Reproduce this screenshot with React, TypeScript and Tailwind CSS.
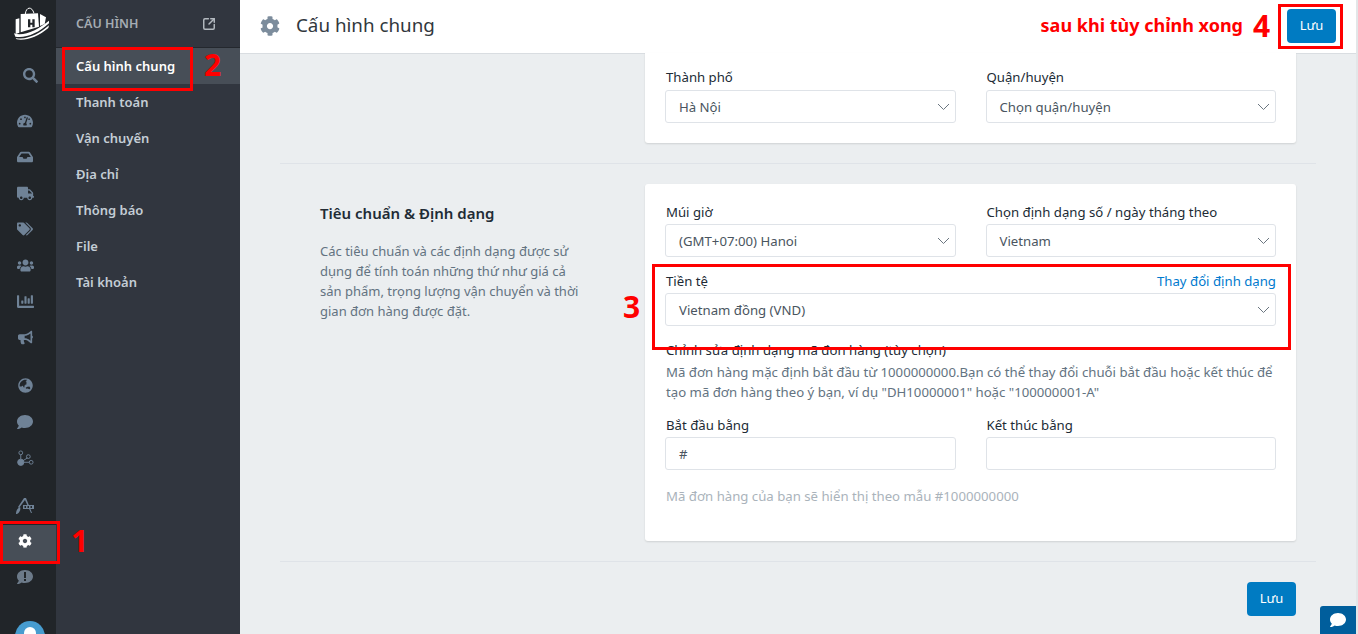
import { SquareArrowOutUpRight } from 'lucide-react';
import {
  FaBullhorn,
  FaChartBar,
  FaCog,
  FaComment,
  FaGlobeAsia,
  FaInbox,
  FaSearch,
  FaTachometerAlt,
  FaTags,
  FaTruck,
  FaUsers,
} from 'react-icons/fa';

const menu = ['Cấu hình chung', 'Thanh toán', 'Vận chuyển', 'Địa chỉ', 'Thông báo', 'File', 'Tài khoản'];

function Logo() {
  return (
    <svg viewBox="0 0 168 144" className="w-14 h-12 text-white" fill="currentColor">
      <path d="M76 42 C78 20 96 18 102 40" fill="none" stroke="currentColor" strokeWidth="3" />
      <path d="M47 58 L58 55 L58 98 L47 102 Z" />
      <path d="M62 42 L114 40 L117 80 L62 97 Z" />
      <path d="M120 42 L138 52 L134 72 L120 78 Z" />
      <path d="M84 58 h7 v10 h6 v-10 h7 v24 h-7 v-8 h-6 v8 h-7 z" fill="#212529" />
      <path d="M42 100 C72 110 112 90 147 62 L147 70 C115 100 75 116 46 110 Z" />
      <path d="M47 114 C80 122 120 100 147 76 L145 84 C115 110 75 124 50 118 Z" />
    </svg>
  );
}

function NodesIcon() {
  return (
    <svg viewBox="0 0 18 18" className="w-[17px] h-[17px] text-[#6f8296]" fill="none" stroke="currentColor" strokeWidth="1">
      <circle cx="4" cy="13" r="3.3" fill="currentColor" />
      <circle cx="4" cy="3" r="2" />
      <circle cx="12" cy="7" r="2" />
      <circle cx="15" cy="13" r="2" />
      <path d="M4 5 V10 M6 11.5 L11 8.5 M7 13 H13" />
    </svg>
  );
}

function DesignIcon() {
  return (
    <svg viewBox="0 0 18 16" className="w-[18px] h-4 text-[#6f8296]" fill="currentColor">
      <path d="M8 0 h2 L16 15 h-1 L9 2 L3 10 L2 9 Z" />
      <path d="M0 16 C0 12 2 10 4 9 C5 11 4 14 1 16 Z" />
      <rect x="7" y="7" width="11" height="4" />
      <path d="M8.500 8 h1.500 v2 h-1.500 z M11.500 8 h1.500 v2 h-1.500 z M14.500 8 h1.500 v2 h-1.500 z" fill="#212529" />
    </svg>
  );
}

function FeedbackIcon() {
  return (
    <div className="relative flex">
      <FaComment className="text-[16px] text-[#6c7a89]" />
      <span className="absolute left-[7px] top-[3px] w-[2px] h-[6px] bg-[#212529]" />
      <span className="absolute left-[7px] top-[10px] w-[2px] h-[2px] bg-[#212529]" />
    </div>
  );
}

function RailIcon({ children, className }: { children: React.ReactNode; className: string }) {
  return <div className={`h-9 shrink-0 flex items-center justify-center pr-[6px] text-[#6f8296] ${className}`}>{children}</div>;
}

function Chevron() {
  return (
    <svg viewBox="0 0 13 8" className="w-[13px] h-2 text-[#6b7680]" fill="none" stroke="currentColor" strokeWidth="1">
      <path d="M1 1 L6.500 6.500 L12 1" />
    </svg>
  );
}

function Field({ label, value, right, plain, labelHeight = 'h-[23px]' }: { label: string; value?: string; right?: string; plain?: boolean; labelHeight?: string }) {
  return (
    <div className="min-w-0">
      <div className={`flex justify-between pt-[1px] pl-[1px] text-[13.2px] leading-[20px] ${labelHeight}`}>
        <span className="text-[#212b35]">{label}</span>
        {right && <a className="text-[#007ace]">{right}</a>}
      </div>
      <div className="h-[33px] pl-[13px] pr-[5px] flex items-center justify-between bg-white border border-[#dfe3e8] rounded-[3px] text-[13.2px] text-[#4a5560]">
        <span className="pt-[2px]">{value}</span>
        {!plain && <Chevron />}
      </div>
    </div>
  );
}

function Box({ className }: { className: string }) {
  return <div className={`absolute border-[3px] border-[#ff0000] pointer-events-none ${className}`} />;
}

function Mark({ children, className }: { children: React.ReactNode; className: string }) {
  return <div className={`absolute font-bold text-[#ff0000] text-[30px] leading-none ${className}`}>{children}</div>;
}

export default function App() {
  return (
    <div className="relative h-[634px] w-[1358px] flex overflow-hidden bg-[#ebeef0] font-['Noto_Sans',sans-serif]">
      {/* icon rail */}
      <aside className="w-[56px] shrink-0 bg-[#212529] flex flex-col">
        <div className="h-[48px] shrink-0 flex justify-center"><Logo /></div>
        <RailIcon className="mt-[9px] pl-[10px] pr-0"><FaSearch className="text-[15px]" /></RailIcon>
        <RailIcon className="mt-[10px]"><FaTachometerAlt className="text-[16px]" /></RailIcon>
        <RailIcon className=""><FaInbox className="text-[16px]" /></RailIcon>
        <RailIcon className=""><FaTruck className="text-[17px]" /></RailIcon>
        <RailIcon className=""><FaTags className="text-[16px]" /></RailIcon>
        <RailIcon className=""><FaUsers className="text-[17px]" /></RailIcon>
        <RailIcon className=""><FaChartBar className="text-[17px]" /></RailIcon>
        <RailIcon className=""><FaBullhorn className="text-[15px]" /></RailIcon>
        <RailIcon className="mt-[12px]"><FaGlobeAsia className="text-[15px]" /></RailIcon>
        <RailIcon className="mt-[1px]"><FaComment className="text-[16px]" /></RailIcon>
        <RailIcon className=""><NodesIcon /></RailIcon>
        <RailIcon className="mt-[12px]"><DesignIcon /></RailIcon>
        <div className="h-[37px] shrink-0 mt-[1px] pr-[6px] pb-[5px] bg-[#474e57] border-b border-[#2b2f36] flex items-center justify-center text-white"><FaCog className="text-[14px]" /></div>
        <RailIcon className="pb-[6px]"><FeedbackIcon /></RailIcon>
        <div className="mt-[23px] ml-[15px] w-[30px] h-[30px] rounded-full bg-[#479ccf] flex justify-center pt-[6px] shrink-0">
          <span className="w-3 h-3 rounded-full bg-white" />
        </div>
      </aside>

      {/* settings menu */}
      <nav className="w-[184px] shrink-0 bg-[#31363f]">
        <div className="h-[48px] pl-[20px] pr-[24px] flex items-center justify-between border-b border-[#24282e]">
          <span className="pt-[2px] text-[12.5px] font-semibold text-[#a5acb3]">CẤU HÌNH</span>
          <SquareArrowOutUpRight className="w-[14px] h-[14px] text-[#b4bac0]" strokeWidth={2.5} />
        </div>
        {menu.map((item, i) => (
          <div
            key={item}
            className={`h-9 pl-[20px] pt-[2px] flex items-center text-[13px] font-semibold ${i === 0 ? 'bg-[#474e57] text-white' : 'text-[#c4cdd5]'}`}
          >
            {item}
          </div>
        ))}
      </nav>

      {/* main */}
      <main className="flex-1 min-w-0 flex flex-col border-r-2 border-[#e3e6e8]">
        <header className="h-[54px] shrink-0 bg-white border-b border-[#d9dde1] px-[20px] pb-[2px] flex items-center">
          <FaCog className="text-[20px] text-[#7c8c9c]" />
          <h1 className="ml-[16px] text-[18.8px] text-[#31373d]">Cấu hình chung</h1>
          <span className="ml-auto text-[18px] font-bold text-[#ff0000]">sau khi tùy chỉnh xong</span>
          <span className="w-[44px]" />
          <button className="w-[49px] h-[34px] rounded-[4px] bg-[#007bc2] text-white text-[13px]">Lưu</button>
        </header>

        <div className="flex-1 pl-[40px] pr-[40px]">
          <div className="ml-[365px] mr-[20px] bg-white rounded-b-[3px] shadow-[0_1px_2px_rgba(0,0,0,0.12)] pl-[20px] pr-[20px] pt-[13px] h-[90px] -mt-[1px]">
            <div className="grid grid-cols-2 gap-[30px]">
              <Field label="Thành phố" value="Hà Nội" labelHeight="h-[24px]" />
              <Field label="Quận/huyện" value="Chọn quận/huyện" labelHeight="h-[24px]" />
            </div>
          </div>

          <div className="border-t border-[#dfe3e8] mt-[20px] pt-[20px] flex">
            <div className="w-[365px] shrink-0 pl-[40px] pr-[58px] pt-[17px]">
              <h2 className="text-[15px] font-semibold text-[#212b35] leading-[24px]">Tiêu chuẩn &amp; Định dạng</h2>
              <p className="mt-[16px] text-[13px] leading-[20px] text-[#637381]">
                Các tiêu chuẩn và các định dạng được sử dụng để tính toán những thứ như giá cả sản phẩm, trọng lượng vận chuyển và thời gian đơn hàng được đặt.
              </p>
            </div>
            <div className="flex-1 min-w-0 mr-[20px] h-[357px] bg-white rounded-[3px] shadow-[0_1px_2px_rgba(0,0,0,0.12)] pl-[20px] pr-[20px] pt-[17px]">
              <div className="grid grid-cols-2 gap-[30px]">
                <Field label="Múi giờ" value="(GMT+07:00) Hanoi" />
                <Field label="Chọn định dạng số / ngày tháng theo" value="Vietnam" />
              </div>
              <div className="mt-[13px]">
                <Field label="Tiền tệ" right="Thay đổi định dạng" value="Vietnam đồng (VND)" />
              </div>
              <div className="mt-[14px] pl-[1px] text-[13.2px] leading-[20px] text-[#212b35]">Chỉnh sửa định dạng mã đơn hàng (tùy chọn)</div>
              <p className="mt-[2px] pl-[1px] text-[13.2px] leading-[20px] text-[#637381]">
                Mã đơn hàng mặc định bắt đầu từ 1000000000.Bạn có thể thay đổi chuỗi bắt đầu hoặc kết thúc để tạo mã đơn hàng theo ý bạn, ví dụ "DH10000001" hoặc "100000001-A"
              </p>
              <div className="mt-[12px] grid grid-cols-2 gap-[30px]">
                <Field label="Bắt đầu bằng" value="#" plain />
                <Field label="Kết thúc bằng" plain />
              </div>
              <p className="mt-[16px] pl-[1px] text-[13.2px] leading-[20px] text-[#aab3bb]">Mã đơn hàng của bạn sẽ hiển thị theo mẫu #1000000000</p>
            </div>
          </div>

          <div className="border-t border-[#dfe3e8] mt-[20px] pt-[20px] flex justify-end pr-[20px]">
            <button className="w-[49px] h-[34px] rounded-[4px] bg-[#007bc2] text-white text-[13px]">Lưu</button>
          </div>
        </div>
      </main>

      {/* chat widget */}
      <div className="absolute right-[2px] bottom-0 w-[36px] h-[28px] bg-[#005e9c] rounded-tl-[3px] flex items-center justify-center">
        <FaComment className="text-white text-[16px]" />
      </div>

      {/* annotations */}
      <Box className="left-0 top-[521px] w-[60px] h-[43px]" />
      <Box className="left-[62px] top-[47px] w-[131px] h-[44px]" />
      <Box className="left-[652px] top-[264px] w-[639px] h-[86px]" />
      <Box className="left-[1278px] top-[4px] w-[65px] h-[45px]" />
      <Mark className="left-[71px] top-[526px]">1</Mark>
      <Mark className="left-[204px] top-[50px]">2</Mark>
      <Mark className="left-[623px] top-[292px]">3</Mark>
      <Mark className="left-[1253px] top-[11px]">4</Mark>
    </div>
  );
}
